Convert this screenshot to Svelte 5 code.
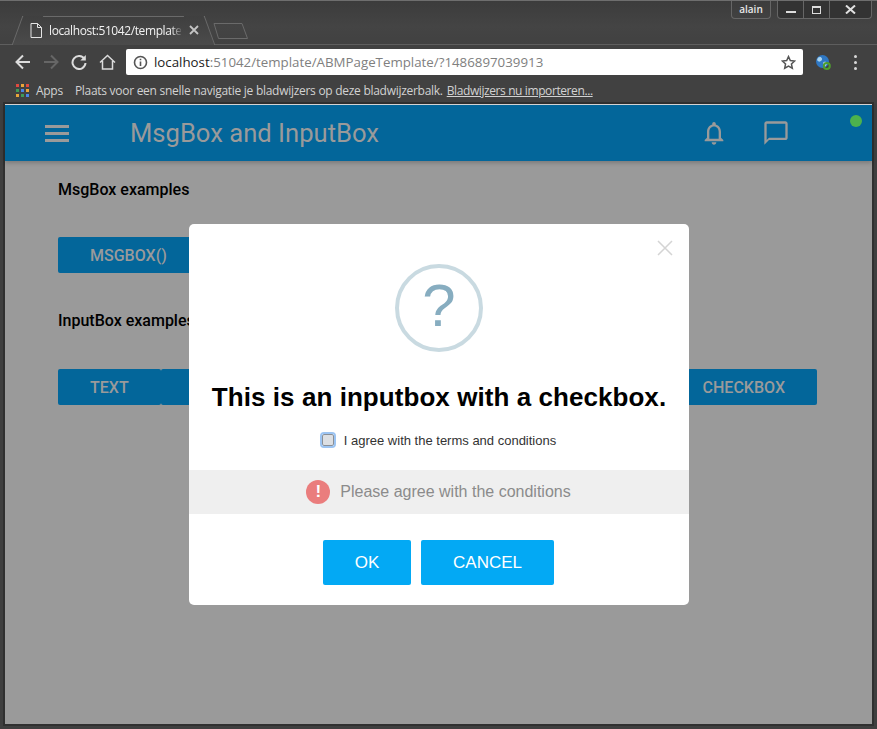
<script>
  const bookmarkNote = 'Plaats voor een snelle navigatie je bladwijzers op deze bladwijzerbalk.';
  const appColors = ['#e04a3f', '#e9a53a', '#e04a3f', '#3f9b58', '#4a86e8', '#e9a53a', '#e9a53a', '#3f9b58', '#4a86e8'];
  const inputButtons = ['TEXT', '', 'CHECKBOX'];
</script>

<div class="window">
  <div class="titlebar">
    <div class="tabs">
      <div class="tab">
        <svg class="file" width="12" height="15" viewBox="0 0 12 15" fill="none" stroke="#e4e4e4" stroke-width="1">
          <path d="M1 .5h6.5l4 4v10h-10.500z M7.500 .5v4h4" />
        </svg>
        <span class="tab-title">localhost:51042/template</span>
        <svg width="10" height="10" viewBox="0 0 10 10" stroke="#c4c4c4" stroke-width="1.800">
          <path d="M1 1l8 8M9 1l-8 8" />
        </svg>
      </div>
      <svg class="newtab" width="36" height="18" viewBox="0 0 36 18" fill="none" stroke="#6a6a6a">
        <path d="M1 1.500h28l5.500 15h-29z" />
      </svg>
    </div>
    <div class="win-controls">
      <div class="user">alain</div>
      <div class="win-buttons">
        <span class="win-btn min"><i></i></span>
        <span class="win-btn max"><i></i></span>
        <span class="win-btn close">
          <svg width="11" height="9" viewBox="0 0 11 9" stroke="#e0e0e0" stroke-width="2"><path d="M1 .5l9 8M10 .5l-9 8" /></svg>
        </span>
      </div>
    </div>
  </div>

  <div class="toolbar">
    <svg width="16" height="16" viewBox="0 0 16 16" fill="none" stroke="#dcdcdc" stroke-width="2"><path d="M15 8H2M8 1.500L1.500 8 8 14.500" /></svg>
    <svg width="16" height="16" viewBox="0 0 16 16" fill="none" stroke="#666" stroke-width="2"><path d="M1 8h13M8 1.500L14.500 8 8 14.500" /></svg>
    <svg width="16" height="16" viewBox="0 0 16 16" fill="none" stroke="#dcdcdc" stroke-width="2"><path d="M13.500 5A6.500 6.500 0 1 0 14.500 9" /><path d="M14.800 1v5.500h-5.500z" fill="#dcdcdc" stroke="none" /></svg>
    <svg width="17" height="16" viewBox="0 0 17 16" fill="none" stroke="#dcdcdc" stroke-width="1.500"><path d="M1 8.500L8.500 1.500 16 8.500M3.500 7v8h10V7" /></svg>
    <div class="omnibox">
      <svg width="15" height="15" viewBox="0 0 15 15" fill="none"><circle cx="7.500" cy="7.500" r="6" stroke="#555" stroke-width="1.600" /><path d="M7.500 6.500v4.500M7.500 3.800v1.500" stroke="#555" stroke-width="1.600" /></svg>
      <span class="url"><b>localhost</b>:51042/template/ABMPageTemplate/?1486897039913</span>
      <svg class="star" width="15" height="15" viewBox="0 0 24 24" fill="none" stroke="#555" stroke-width="2.400"><path d="M12 2.500l2.900 6.300 6.900.8-5.100 4.700 1.400 6.800-6.100-3.400-6.100 3.400 1.400-6.800-5.100-4.700 6.900-.8z" /></svg>
    </div>
    <svg class="globe" width="16" height="16" viewBox="0 0 16 16">
      <circle cx="7.500" cy="7.500" r="6.500" fill="#2f78c4" />
      <path d="M3 3.500c2-1 3.500-.5 4 1s-1 2.500-2 3-2.500-.5-3-1.500zM8.500 8c2-.5 3.500 0 3.500 1.500S10 12.500 9 13.500c-1-1.500-1.500-4-.5-5.500z" fill="#a9d3ee" />
      <circle cx="11.800" cy="12" r="3" fill="none" stroke="#4f9e2e" stroke-width="2" />
    </svg>
    <div class="kebab"><i></i><i></i><i></i></div>
  </div>

  <div class="bookmarks">
    <div class="apps">
      {#each appColors as c}<i style="background: {c}"></i>{/each}
    </div>
    <span class="apps-label">Apps</span>
    <span class="note">{bookmarkNote}</span>
    <a href="#import">Bladwijzers nu importeren...</a>
  </div>

  <div class="page">
    <header class="appbar">
      <div class="burger"><i></i><i></i><i></i></div>
      <h1>MsgBox and InputBox</h1>
      <svg class="bell" width="28" height="28" viewBox="0 0 24 24" fill="#9a9a9a">
        <path d="M12 22c1.100 0 2-.9 2-2h-4c0 1.100.9 2 2 2zm6-6v-5c0-3.070-1.630-5.640-4.500-6.320V4c0-.83-.67-1.500-1.500-1.500s-1.500.67-1.500 1.500v.68C7.640 5.360 6 7.920 6 11v5l-2 2v1h16v-1l-2-2zm-2 1H8v-6c0-2.480 1.510-4.500 4-4.500s4 2.020 4 4.500v6z" />
      </svg>
      <svg class="chat" width="28" height="28" viewBox="0 0 24 24" fill="#9a9a9a">
        <path d="M20 2H4c-1.100 0-2 .9-2 2v18l4-4h14c1.100 0 2-.9 2-2V4c0-1.100-.9-2-2-2zm0 14H6l-2 2V4h16v12z" />
      </svg>
      <span class="status"></span>
    </header>

    <main>
      <h2>MsgBox examples</h2>
      <div class="btn-row first"><button class="flat msg">MSGBOX()</button></div>
      <h2 class="second">InputBox examples</h2>
      <div class="btn-row">
        {#each inputButtons as label}
          <button class="flat" class:filler={!label}>{label}</button>
        {/each}
      </div>
    </main>

    <div class="modal">
      <svg class="x" width="16" height="16" viewBox="0 0 16 16" stroke="#d4d4d4" stroke-width="1.500"><path d="M1 1l14 14M15 1L1 15" /></svg>
      <div class="question"><span>?</span></div>
      <h3>This is an inputbox with a checkbox.</h3>
      <label class="check"><span class="box"></span>I agree with the terms and conditions</label>
      <div class="error">
        <span class="bang">!</span>
        <span>Please agree with the conditions</span>
      </div>
      <div class="actions">
        <button class="primary ok">OK</button>
        <button class="primary cancel">CANCEL</button>
      </div>
    </div>
  </div>
</div>

<style>
  :global(body) {
    margin: 0;
    background: #3a3a3a;
  }

  .window {
    width: 877px;
    height: 729px;
    box-sizing: border-box;
    overflow: hidden;
    position: relative;
    display: flex;
    flex-direction: column;
    background: #3f3f3f;
    border-top: 1px solid #6e6e6e;
    font-family: "Open Sans", "Noto Sans", sans-serif;
  }

  .titlebar {
    height: 43px;
    flex: none;
    display: flex;
    justify-content: space-between;
    background: linear-gradient(#3c3c3c, #444 60%, #414141);
    border-bottom: 1px solid #5e5e5e;
    padding-left: 5px;
  }

  .tabs {
    display: flex;
    align-items: flex-end;
  }

  .tab {
    width: 183px;
    height: 29px;
    margin: 0 0 -1px 17px;
    display: flex;
    align-items: center;
    padding: 0 0 2px 8px;
    box-sizing: border-box;
    color: #f2f2f2;
    font-size: 12px;
    background: linear-gradient(#3f3f3f, #4b4b4b);
    border-top: 1px solid #6a6a6a;
    position: relative;
    isolation: isolate;
  }

  .tab::before,
  .tab::after {
    content: '';
    position: absolute;
    top: -1px;
    bottom: 0;
    width: 20px;
    z-index: -1;
    background: linear-gradient(#3f3f3f, #4b4b4b);
  }

  .tab::before {
    left: -5px;
    border-left: 1px solid #6a6a6a;
    transform: skewX(-20deg);
  }

  .tab::after {
    right: -5px;
    border-right: 1px solid #6a6a6a;
    transform: skewX(20deg);
  }

  .tab-title {
    width: 132px;
    flex: none;
    margin: 0 8px 0 7px;
    white-space: nowrap;
    letter-spacing: -0.4px;
    mask-image: linear-gradient(to right, #000 122px, transparent 134px);
  }

  .newtab {
    margin: 0 0 4px 8px;
  }

  .win-controls {
    display: flex;
    gap: 6px;
    padding-right: 5px;
    align-items: flex-start;
  }

  .user {
    width: 38px;
    height: 17px;
    line-height: 17px;
    text-align: center;
    color: #e8e8e8;
    font-size: 10px;
    font-weight: 600;
    border: 1px solid #666;
    border-top: none;
    border-radius: 0 0 4px 4px;
  }

  .win-buttons {
    display: flex;
    height: 17px;
    background: #333;
    border: 1px solid #666;
    border-top: none;
    border-radius: 0 0 4px 4px;
  }

  .win-btn {
    display: flex;
    align-items: center;
    justify-content: center;
    border-right: 1px solid #666;
    width: 25px;
  }

  .win-btn.close {
    border: none;
    width: 41px;
  }

  .min i {
    width: 10px;
    height: 2px;
    background: #ddd;
    margin-top: 5px;
  }

  .max i {
    width: 7px;
    height: 5px;
    border: 1px solid #ddd;
    border-top-width: 2px;
  }

  .toolbar {
    height: 34px;
    flex: none;
    display: flex;
    align-items: center;
    padding: 0 0 0 15px;
    gap: 12px;
    box-sizing: border-box;
    background: #414141;
  }

  .omnibox {
    width: 677px;
    height: 26px;
    margin-left: -2px;
    background: #fff;
    border-radius: 2px;
    display: flex;
    align-items: center;
    padding: 0 7px;
    box-sizing: border-box;
    gap: 6px;
    font-size: 13.300px;
    color: #808080;
  }

  .url {
    flex: 1;
    white-space: nowrap;
  }

  .url b {
    font-weight: 400;
    color: #222;
  }

  .globe {
    margin-left: 0;
  }

  .kebab {
    display: flex;
    flex-direction: column;
    gap: 3px;
    margin-left: 11px;
  }

  .kebab i {
    width: 3px;
    height: 3px;
    border-radius: 50%;
    background: #d8d8d8;
  }

  .bookmarks {
    height: 25px;
    flex: none;
    display: flex;
    align-items: center;
    padding: 0 0 3px 16px;
    background: #414141;
    color: #d2d2d2;
    font-size: 12px;
    box-sizing: border-box;
    white-space: nowrap;
    letter-spacing: -0.28px;
  }

  .apps {
    display: grid;
    grid-template-columns: repeat(3, 3px);
    grid-auto-rows: 3px;
    gap: 2px;
  }

  .apps i {
    display: block;
  }

  .apps-label {
    margin-left: 7px;
  }

  .note {
    margin-left: 12px;
  }

  .bookmarks a {
    color: #d2d2d2;
    margin-left: 4px;
    letter-spacing: -0.4px;
  }

  .page {
    margin: 0 5px;
    height: 620px;
    flex: none;
    position: relative;
    border-top: 1px solid #d8d8d8;
    box-sizing: border-box;
    background: #9a9a9a;
    font-family: Roboto, sans-serif;
    box-shadow: 0 0 0 2px #303030;
  }

  .appbar {
    height: 56px;
    display: flex;
    align-items: center;
    background: #03669a;
    box-shadow: 0 2px 4px rgba(0, 0, 0, 0.2);
    position: relative;
  }

  .burger {
    margin-left: 40px;
    display: flex;
    flex-direction: column;
    gap: 4px;
    width: 24px;
  }

  .burger i {
    display: block;
    height: 3px;
    background: #9a9a9a;
  }

  h1 {
    margin: 0 0 0 61px;
    font-size: 25.600px;
    font-weight: 400;
    color: #9a9a9a;
    flex: 1;
  }

  .bell {
    margin-right: 34px;
  }

  .chat {
    margin-right: 82px;
  }

  .status {
    position: absolute;
    right: 10px;
    top: 10px;
    width: 12px;
    height: 12px;
    border-radius: 50%;
    background: #4db24d;
  }

  main {
    padding: 19px 55px 0 53px;
  }

  h2 {
    margin: 0;
    font-size: 16px;
    line-height: 19px;
    font-weight: 500;
    color: #000;
  }

  h2.second {
    margin-top: 38px;
  }

  .btn-row {
    display: flex;
    margin-top: 39px;
    height: 36px;
  }

  .btn-row.first {
    margin-top: 38px;
  }

  .flat {
    flex: none;
    height: 36px;
    padding: 0 32px;
    border: none;
    border-radius: 2px;
    background: #03669a;
    color: #9a9a9a;
    font-family: Roboto, sans-serif;
    font-size: 16px;
    font-weight: 500;
  }

  .flat.filler {
    flex: 1;
  }

  .modal {
    position: absolute;
    left: 184px;
    top: 119px;
    width: 500px;
    height: 381px;
    background: #fff;
    border-radius: 5px;
    display: flex;
    flex-direction: column;
    align-items: center;
    font-family: "Liberation Sans", Arial, sans-serif;
  }

  .x {
    position: absolute;
    right: 16px;
    top: 16px;
  }

  .question {
    width: 88px;
    height: 88px;
    margin-top: 40px;
    padding-bottom: 4px;
    box-sizing: border-box;
    border: 4px solid #c9dae1;
    border-radius: 50%;
    display: flex;
    align-items: center;
    justify-content: center;
    color: #87adc0;
    font-size: 60px;
    line-height: 1;
  }

  h3 {
    margin: 30px 0 0;
    font-size: 26px;
    line-height: 30px;
    font-weight: 700;
    color: #000;
    white-space: nowrap;
    letter-spacing: 0.06px;
  }

  .check {
    margin-top: 19px;
    display: flex;
    align-items: center;
    height: 18px;
    font-size: 13px;
    color: #333;
  }

  .box {
    width: 10px;
    height: 10px;
    margin-right: 10px;
    border: 1px solid #8a8f96;
    outline: 2px solid #9cc4f2;
    border-radius: 2px;
    background: #dcdfe3;
  }

  .error {
    width: 100%;
    height: 44px;
    margin-top: 21px;
    padding-right: 1px;
    box-sizing: border-box;
    background: #efefef;
    display: flex;
    align-items: center;
    justify-content: center;
    gap: 10px;
    font-size: 16px;
    color: #8b8b8b;
  }

  .bang {
    width: 24px;
    height: 24px;
    border-radius: 50%;
    background: #ea7d7d;
    color: #fff;
    font-weight: 700;
    font-size: 17px;
    display: flex;
    align-items: center;
    justify-content: center;
  }

  .actions {
    margin-top: 26px;
    padding-right: 1px;
    display: flex;
    gap: 10px;
  }

  .primary {
    height: 45px;
    border: none;
    border-radius: 2px;
    background: #03a9f4;
    color: #fff;
    font-family: "Liberation Sans", Arial, sans-serif;
    font-size: 17px;
    padding: 0;
  }

  .ok {
    width: 88px;
  }

  .cancel {
    width: 133px;
  }
</style>
